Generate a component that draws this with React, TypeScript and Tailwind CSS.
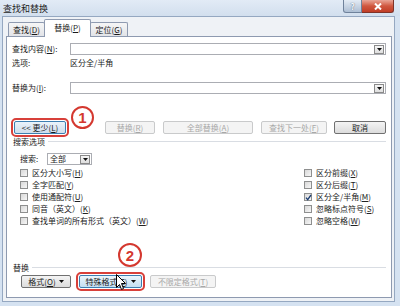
import React from "react";

function K({ k }: { k: string }) {
  return (
    <span>
      (<span className="underline decoration-[0.5px] underline-offset-1">{k}</span>)
    </span>
  );
}

function Btn({
  children,
  className = "",
  kind = "normal",
}: {
  children: React.ReactNode;
  className?: string;
  kind?: "normal" | "disabled" | "focus" | "hover";
}) {
  const look =
    kind === "disabled"
      ? "border-[#c9cacb] bg-[#f4f4f4] text-[#a8a8a8]"
      : kind === "focus"
        ? "border-[#3c7fb1] bg-linear-to-b from-[#eaf3fb] to-[#cfdeec] text-[#1a1a1a]"
        : kind === "hover"
          ? "border-[#3c7fb1] bg-linear-to-b from-[#eaf6fd] to-[#c4dff2] text-[#1a1a1a]"
          : "border-[#707070] bg-linear-to-b from-[#f4f4f4] to-[#dcdcdc] text-[#1a1a1a]";
  return (
    <div className={`flex h-[13px] items-center justify-center rounded-[2px] border ${look} ${className}`}>
      {children}
    </div>
  );
}

function Tri() {
  return (
    <svg width="5" height="3" viewBox="0 0 5 3" className="ml-[3px]">
      <path d="M0 0h5L2.5 3z" fill="#111" />
    </svg>
  );
}

function Arrow() {
  return (
    <div className="flex h-[9px] w-[10px] items-center justify-center border border-[#8a8a8a] bg-linear-to-b from-[#f6f6f6] to-[#dedede]">
      <svg width="5" height="3" viewBox="0 0 5 3">
        <path d="M0 0h5L2.5 3z" fill="#111" />
      </svg>
    </div>
  );
}

function Check({ label, on = false }: { label: React.ReactNode; on?: boolean }) {
  return (
    <div className="flex h-[12px] items-center">
      <div className="relative flex h-[8px] w-[8px] items-center justify-center border border-[#8e8f8f] bg-linear-to-br from-[#d8d8d8] to-[#f7f7f7]">
        {on && (
          <svg width="7" height="7" viewBox="0 0 7 7" className="absolute">
            <path d="M1 3.6l1.7 2L6 1" fill="none" stroke="#1e3f72" strokeWidth="1.3" />
          </svg>
        )}
      </div>
      <span className="ml-[4px] text-[#222]">{label}</span>
    </div>
  );
}

function Section({ title }: { title: string }) {
  return (
    <div className="flex h-[11px] items-center">
      <span className="ml-px">{title}</span>
      <div className="ml-[3px] flex-1 border-t border-[#d9dde3]" />
    </div>
  );
}

export default function App() {
  return (
    <div className="relative h-[306px] w-[400px] overflow-hidden bg-[#d5e2f1] font-['Noto_Sans_CJK_SC',sans-serif] text-[8px] leading-none text-[#1a1a1a]">
      {/* title bar */}
      <div className="flex h-[16px] items-start justify-between bg-linear-to-b from-[#e2ebf6] to-[#d2dfee]">
        <span className="ml-[3px] mt-[4px] text-[9px] text-[#1e1e1e]">查找和替换</span>
        <div className="mr-[6px] flex">
          <div className="flex h-[13px] w-[19px] items-center justify-center rounded-bl-[3px] border border-t-0 border-[#6f829b] bg-linear-to-b from-[#e4ecf5] to-[#aebfd4] text-[9px] font-bold text-[#f4f7fb] [text-shadow:0_0_1px_#34495f]">
            ?
          </div>
          <div className="flex h-[13px] w-[32px] items-center justify-center rounded-br-[3px] border border-l-0 border-t-0 border-[#7f3328] bg-linear-to-b from-[#e8a597] via-[#d0573f] to-[#c03c25]">
            <svg width="8" height="7" viewBox="0 0 8 7">
              <path d="M1 0.5l6 6M7 0.5l-6 6" stroke="#fff" strokeWidth="2" />
            </svg>
          </div>
        </div>
      </div>

      {/* client area */}
      <div className="ml-[2px] mr-[5px] flex h-[286px] flex-col border border-[#95a8c1] bg-[#eff2f6]">
        <div className="flex h-[20px] items-end pl-[5px]">
          <div className="mb-px flex h-[14px] w-[37px] items-center justify-center rounded-t-[2px] border border-b-0 border-[#8e9ab0] bg-linear-to-b from-[#f6f6f6] to-[#e2e4e8]">
            查找<K k="D" />
          </div>
          <div className="relative z-10 -mx-px flex h-[18px] w-[47px] items-center justify-center rounded-t-[2px] border border-b-0 border-[#8e9ab0] bg-white pb-[2px]">
            替换<K k="P" />
          </div>
          <div className="mb-px flex h-[14px] w-[38px] items-center justify-center rounded-t-[2px] border border-b-0 border-[#8e9ab0] bg-linear-to-b from-[#f6f6f6] to-[#e2e4e8]">
            定位<K k="G" />
          </div>
        </div>

        <div className="-mt-px mb-[3px] ml-[3px] mr-[2px] flex flex-1 flex-col border border-[#8e9ab0] bg-white px-[5px]">
          {/* find */}
          <div className="mt-[6px] flex h-[12px] items-center">
            <span className="w-[58px]">
              查找内容<K k="N" />:
            </span>
            <div className="flex h-[12px] flex-1 items-center justify-end border border-[#abadb3] pr-px">
              <Arrow />
            </div>
          </div>
          <div className="mt-[2px] flex h-[11px] items-center">
            <span className="w-[58px]">选项:</span>
            <span>区分全/半角</span>
          </div>

          {/* replace */}
          <div className="mt-[14px] flex h-[12px] items-center">
            <span className="w-[58px]">
              替换为<K k="I" />:
            </span>
            <div className="flex h-[12px] flex-1 items-center justify-end border border-[#abadb3] pr-px">
              <Arrow />
            </div>
          </div>

          {/* buttons */}
          <div className="mt-[27px] flex items-center">
            <Btn
              kind="focus"
              className="ml-[2px] w-[52px] outline-2 outline-offset-1 outline-[#d8403a]"
            >
              &lt;&lt; 更少<K k="L" />
            </Btn>
            <Btn kind="disabled" className="ml-[39px] w-[50px]">
              替换<K k="R" />
            </Btn>
            <Btn kind="disabled" className="ml-[8px] w-[90px]">
              全部替换<K k="A" />
            </Btn>
            <Btn kind="disabled" className="ml-[8px] w-[66px]">
              查找下一处<K k="F" />
            </Btn>
            <Btn className="ml-[7px] w-[52px]">取消</Btn>
          </div>

          <div className="mt-[2px]">
            <Section title="搜索选项" />
          </div>

          <div className="ml-[8px] mt-[6px] flex h-[12px] items-center">
            <span className="w-[27px]">搜索:</span>
            <div className="flex h-[12px] w-[45px] items-center justify-between border border-[#abadb3] pl-[2px] pr-px">
              <span>全部</span>
              <Arrow />
            </div>
          </div>

          <div className="ml-[8px] mt-[2px] flex justify-between">
            <div className="flex flex-col">
              <Check label={<>区分大小写<K k="H" /></>} />
              <Check label={<>全字匹配<K k="Y" /></>} />
              <Check label={<>使用通配符<K k="U" /></>} />
              <Check label={<>同音（英文）<K k="K" /></>} />
              <Check label={<>查找单词的所有形式（英文）<K k="W" /></>} />
            </div>
            <div className="flex w-[82px] flex-col">
              <Check label={<>区分前缀<K k="X" /></>} />
              <Check label={<>区分后缀<K k="T" /></>} />
              <Check on label={<>区分全/半角<K k="M" /></>} />
              <Check label={<>忽略标点符号<K k="S" /></>} />
              <Check label={<>忽略空格<K k="W" /></>} />
            </div>
          </div>

          <div className="mt-[35px]">
            <Section title="替换" />
          </div>

          <div className="ml-[9px] mt-[2px] flex items-center">
            <Btn className="w-[50px]">
              格式<K k="O" />
              <Tri />
            </Btn>
            <Btn
              kind="hover"
              className="ml-[8px] w-[63px] outline-2 outline-offset-1 outline-[#d8403a]"
            >
              特殊格式<K k="E" />
              <Tri />
            </Btn>
            <Btn kind="disabled" className="ml-[8px] w-[66px]">
              不限定格式<K k="T" />
            </Btn>
          </div>
        </div>
      </div>

      {/* annotations */}
      <div className="absolute left-[71px] top-[106px] flex h-[23px] w-[23px] items-center justify-center rounded-full border-2 border-[#d4382f] bg-white font-['Liberation_Sans',sans-serif] text-[15px] font-bold text-[#d4382f]">
        1
      </div>
      <div className="absolute left-[118px] top-[243px] flex h-[24px] w-[24px] items-center justify-center rounded-full border-2 border-[#d4382f] bg-white font-['Liberation_Sans',sans-serif] text-[15px] font-bold text-[#d4382f]">
        2
      </div>
      <svg className="absolute left-[116px] top-[274px]" width="11" height="17" viewBox="0 0 11 17">
        <path d="M0.5 0.5v13l3-3 2 5 2-1-2-5h4z" fill="#fff" stroke="#000" strokeWidth="1" />
      </svg>
    </div>
  );
}
